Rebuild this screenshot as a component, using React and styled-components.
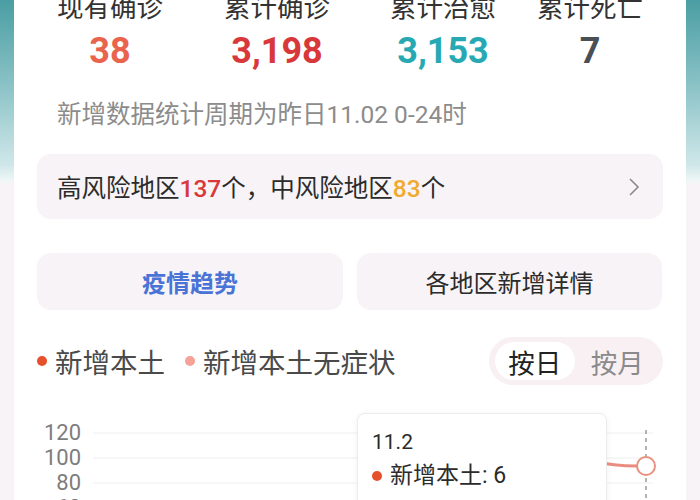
import styled, { createGlobalStyle } from "styled-components";

const GlobalStyle = createGlobalStyle`
  html, body {
    margin: 0;
    padding: 0;
    width: 700px;
    height: 500px;
    overflow: hidden;
    font-family: Roboto, "Noto Sans CJK SC", "Noto Sans", sans-serif;
  }
`;

const stats = [
    { label: '现有确诊', value: '38', color: '#e9634d' },
    { label: '累计确诊', value: '3,198', color: '#d9383a' },
    { label: '累计治愈', value: '3,153', color: '#27a9b4' },
    { label: '累计死亡', value: '7', color: '#4a4f55' },
];

export default function App() {
    return (
        <Page>
            <GlobalStyle />
            <Card>
                <Stats>
                    {stats.map((s) => (
                        <Stat key={s.label}>
                            <span className="label">{s.label}</span>
                            <Value color={s.color}>{s.value}</Value>
                        </Stat>
                    ))}
                </Stats>
                <Note>新增数据统计周期为昨日11.02 0-24时</Note>

                <RiskBar>
                    <span>
                        高风险地区<Num color="#d9383a">137</Num>个，中风险地区<Num color="#f0aa2e">83</Num>个
                    </span>
                    <svg width="14" height="22" viewBox="0 0 14 22">
                        <path d="M3 3 L11 11 L3 19" fill="none" stroke="#8a8a8a" strokeWidth="1.6" />
                    </svg>
                </RiskBar>

                <Tabs>
                    <Tab active>疫情趋势</Tab>
                    <Tab>各地区新增详情</Tab>
                </Tabs>

                <LegendRow>
                    <Legend>
                        <LegendItem><Dot color="#e6502a" />新增本土</LegendItem>
                        <LegendItem><Dot color="#f5a197" />新增本土无症状</LegendItem>
                    </Legend>
                    <Toggle>
                        <ToggleItem active>按日</ToggleItem>
                        <ToggleItem>按月</ToggleItem>
                    </Toggle>
                </LegendRow>

                <Chart>
                    <Axis>
                        <span>120</span>
                        <span>100</span>
                        <span>80</span>
                        <span>60</span>
                    </Axis>
                    <Plot>
                        <svg width="570" height="100" viewBox="0 0 570 100">
                            {[13, 38, 63, 88].map((y) => (
                                <line key={y} x1="0" x2="560" y1={y} y2={y} stroke="#eeeeee" strokeWidth="1" />
                            ))}
                            <line x1="553" x2="553" y1="10" y2="100" stroke="#9a9a9a" strokeWidth="1.5" strokeDasharray="4 4" />
                            <path d="M500 41 Q520 46 544 46" fill="none" stroke="#ea8d80" strokeWidth="3" />
                            <circle cx="553" cy="46" r="9" fill="#fff" stroke="#e9917f" strokeWidth="2" />
                        </svg>
                        <Tooltip>
                            <div className="date">11.2</div>
                            <div className="row"><Dot color="#e6502a" />新增本土: 6</div>
                            <div className="row"><Dot color="#f5a197" />新增本土无症状: 1</div>
                        </Tooltip>
                    </Plot>
                </Chart>
            </Card>
        </Page>
    );
}

const Page = styled.div`
    width: 700px;
    height: 500px;
    padding: 0 14px;
    box-sizing: border-box;
    background: linear-gradient(180deg, #4a9ea3 0%, #86c0c4 16%, #cfe7e9 33%, #eef6f6 36%, #f8f3f6 37%, #f8f3f6 100%);
    overflow: hidden;
`;

const Card = styled.div`
    background: #fff;
    margin-top: -8px;
    padding: 0 23px 20px 23px;
    height: 540px;
`;

const Stats = styled.div`
    display: grid;
    grid-template-columns: 167px 166px 147px 106px;
    padding-left: 18px;
`;

const Stat = styled.div`
    width: 110px;
    display: flex;
    flex-direction: column;
    align-items: center;

    .label{
        font-size: 26.5px;
        line-height: 32px;
        color: #333;
    }
`;

const Value = styled.span`
    margin-top: 6px;
    font-size: 36px;
    line-height: 42px;
    font-weight: 700;
    color: ${(p) => p.color};
`;

const Note = styled.p`
    margin: 28px 0 0 20px;
    font-size: 24.5px;
    line-height: 30px;
    color: #8c8c8c;
`;

const RiskBar = styled.div`
    margin-top: 24px;
    height: 65px;
    border-radius: 14px;
    background: #f7f3f6;
    display: flex;
    align-items: center;
    justify-content: space-between;
    padding: 0 22px 0 20px;
    font-size: 24.5px;
    color: #2b2b2b;
`;

const Num = styled.span`
    color: ${(p) => p.color};
    font-weight: 500;
`;

const Tabs = styled.div`
    margin-top: 34px;
    display: grid;
    grid-template-columns: 306px 305px;
    gap: 14px;
`;

const Tab = styled.div`
    height: 57px;
    border-radius: 14px;
    background: #f8f3f6;
    display: flex;
    align-items: center;
    justify-content: center;
    font-size: 24px;
    font-weight: ${(p) => (p.active ? 700 : 400)};
    color: ${(p) => (p.active ? '#4a73d6' : '#2b2b2b')};
`;

const LegendRow = styled.div`
    margin-top: 27px;
    display: flex;
    align-items: center;
    justify-content: space-between;
`;

const Legend = styled.div`
    display: flex;
    gap: 20px;
    font-size: 27.5px;
    color: #4a4a4a;
`;

const LegendItem = styled.div`
    display: flex;
    align-items: center;
    gap: 8px;
`;

const Dot = styled.span`
    width: 10px;
    height: 10px;
    border-radius: 50%;
    background: ${(p) => p.color};
    display: inline-block;
    flex-shrink: 0;
`;

const Toggle = styled.div`
    width: 174px;
    height: 48px;
    border-radius: 24px;
    background: #f8f0f3;
    box-sizing: border-box;
    padding: 5px 6px;
    display: flex;
    align-items: center;
`;

const ToggleItem = styled.div`
    width: 81px;
    height: 38px;
    border-radius: 19px;
    display: flex;
    align-items: center;
    justify-content: center;
    font-size: 26.5px;
    background: ${(p) => (p.active ? '#fff' : 'transparent')};
    color: ${(p) => (p.active ? '#222' : '#8a8a8a')};
    margin-left: ${(p) => (p.active ? '0' : '3px')};
`;

const Chart = styled.div`
    margin-top: 35px;
    display: flex;
    gap: 12px;
`;

const Axis = styled.div`
    width: 44px;
    display: flex;
    flex-direction: column;
    align-items: flex-end;
    font-size: 22px;
    line-height: 25px;
    color: #7d7d7d;
`;

const Plot = styled.div`
    position: relative;
    flex: 1;
`;

const Tooltip = styled.div`
    position: absolute;
    left: 264px;
    top: -7px;
    width: 250px;
    height: 130px;
    box-sizing: border-box;
    background: #fff;
    border: 1px solid #ececec;
    border-radius: 8px;
    box-shadow: 0 1px 6px rgba(0, 0, 0, 0.06);
    padding: 13px 14px;
    color: #2b2b2b;

    .date{
        font-size: 21px;
        line-height: 30px;
    }

    .row{
        display: flex;
        align-items: center;
        gap: 8px;
        font-size: 23px;
        line-height: 38px;
    }
`;
